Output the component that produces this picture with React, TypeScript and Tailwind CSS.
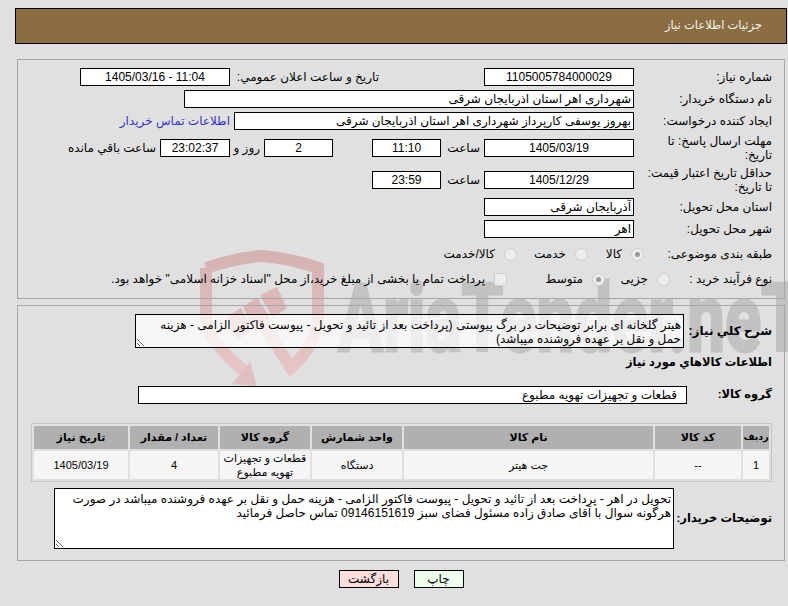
const Box = ({
  children,
  className = "",
}: {
  children?: React.ReactNode;
  className?: string;
}) => (
  <div
    className={`h-[18px] shrink-0 border border-black bg-white px-[2px] text-[12px] leading-[16px] whitespace-nowrap overflow-hidden ${className}`}
  >
    {children}
  </div>
);

const Label = ({ children }: { children: React.ReactNode }) => (
  <div className="w-[138px] shrink-0 pl-[12px] leading-[14px]">{children}</div>
);

const Radio = ({ checked = false }: { checked?: boolean }) => (
  <span className="flex h-[13px] w-[13px] shrink-0 items-center justify-center rounded-full border border-[#cfcfcf] bg-[#ececec]">
    {checked && <span className="h-[5px] w-[5px] rounded-full bg-[#9a9a9a]" />}
  </span>
);

const Watermark = () => (
  <svg className="absolute top-0 left-0 h-[606px] w-[788px]" viewBox="0 0 788 606">
    <defs>
      <linearGradient id="shield" x1="0" y1="0" x2="0" y2="1">
        <stop offset="0" stopColor="#d6b3b3" />
        <stop offset="1" stopColor="#e6c6c6" />
      </linearGradient>
    </defs>
    <text
      x="338"
      y="351"
      direction="ltr"
      fontFamily="Roboto, sans-serif"
      fontWeight="700"
      fontSize="94"
      fill="#c2c2c2"
      stroke="#c2c2c2"
      strokeWidth="3"
      textLength="465"
      lengthAdjust="spacingAndGlyphs"
    >
      AriaTender.neT
    </text>
    <path
      d="M206 268 Q236 258 262 256 Q290 258 318 268 L318 318 Q316 345 291 368 L262 322 M206 268 L206 320 Q206 340 250 376"
      fill="none"
      stroke="url(#shield)"
      strokeWidth="12"
    />
    <path d="M232 384 L250 362 L257 386 Z" fill="#e0c0c0" />
    <path d="M226 317 L241 308 L252 331 L237 340 Z" fill="#dcb8b8" />
    <path d="M243 307 L257 297 L270 318 L254 331 Z" fill="#dcb8b8" />
    <path d="M260 295 L277 287 L287 308 L273 318 Z" fill="#dcb8b8" />
  </svg>
);

const App = () => {
  return (
    <div
      dir="rtl"
      className="relative min-h-[606px] w-[788px] overflow-hidden bg-[#e0e0e0] font-['Liberation_Sans','DejaVu_Sans',sans-serif] text-[12px] text-black"
    >
      <Watermark />
      <div className="relative flex flex-col pt-2 pr-px pl-[15px]">
        <div className="flex h-9 items-center border border-black bg-[#8b6d42] pr-6 text-[11.5px] text-[#f4f4f4]">
          جزئیات اطلاعات نیاز
        </div>

        <div className="mt-[15px] mr-[2px] ml-[2px] h-[240px] border border-[#a6a6a6] pt-[6px] pr-[12px]">
          <div className="flex h-[22px] items-center">
            <Label>شماره نیاز:</Label>
            <Box className="w-[150px] text-center">1105005784000029</Box>
            <div className="w-[254px] shrink-0 pr-[105px]">تاريخ و ساعت اعلان عمومي:</div>
            <Box className="w-[150px] text-center">
              <span dir="ltr">1405/03/16 - 11:04</span>
            </Box>
          </div>
          <div className="flex h-[22px] items-center">
            <Label>نام دستگاه خریدار:</Label>
            <Box className="w-[450px]">شهرداری اهر استان اذربایجان شرقی</Box>
          </div>
          <div className="flex h-[22px] items-center">
            <Label>ایجاد کننده درخواست:</Label>
            <Box className="w-[400px]">بهروز یوسفی کارپرداز شهرداری اهر استان اذربایجان شرقی</Box>
            <a className="mr-[4px] whitespace-nowrap text-[#3333cc]">اطلاعات تماس خریدار</a>
          </div>
          <div className="flex h-[32px] items-center">
            <Label>مهلت ارسال پاسخ: تا تاریخ:</Label>
            <Box className="w-[150px] text-center">1405/03/19</Box>
            <div className="w-[43px] shrink-0 pr-[4px]">ساعت</div>
            <Box className="w-[69px] text-center">11:10</Box>
            <div className="w-[39px] shrink-0" />
            <Box className="w-[69px] text-center">2</Box>
            <div className="w-[34px] shrink-0 pr-[4px]">روز و</div>
            <Box className="w-[70px] bg-[#ffffee] text-center">23:02:37</Box>
            <div className="mr-[4px] whitespace-nowrap">ساعت باقي مانده</div>
          </div>
          <div className="flex h-[32px] items-center">
            <Label>حداقل تاریخ اعتبار قیمت: تا تاریخ:</Label>
            <Box className="w-[150px] text-center">1405/12/29</Box>
            <div className="w-[43px] shrink-0 pr-[4px]">ساعت</div>
            <Box className="w-[69px] text-center">23:59</Box>
          </div>
          <div className="flex h-[22px] items-center">
            <Label>استان محل تحویل:</Label>
            <Box className="w-[150px]">آذربایجان شرقی</Box>
          </div>
          <div className="flex h-[22px] items-center">
            <Label>شهر محل تحویل:</Label>
            <Box className="w-[150px]">اهر</Box>
          </div>
          <div className="flex h-[28px] items-center">
            <div className="w-[128px] shrink-0">طبقه بندی موضوعی:</div>
            <div className="flex w-[56px] shrink-0 items-center gap-[9px]">
              <Radio checked />
              <span>کالا</span>
            </div>
            <div className="flex w-[71px] shrink-0 items-center gap-[9px]">
              <Radio />
              <span>خدمت</span>
            </div>
            <div className="flex items-center gap-[9px]">
              <Radio />
              <span>کالا/خدمت</span>
            </div>
          </div>
          <div className="flex h-[22px] items-center">
            <div className="w-[102px] shrink-0">نوع فرآیند خرید :</div>
            <div className="flex w-[65px] shrink-0 items-center gap-[9px]">
              <Radio />
              <span>جزیی</span>
            </div>
            <div className="flex w-[98px] shrink-0 items-center gap-[9px]">
              <Radio checked />
              <span>متوسط</span>
            </div>
            <div className="flex items-center gap-[9px] whitespace-nowrap">
              <span className="h-[13px] w-[13px] shrink-0 rounded-[2px] border border-[#cfcfcf] bg-[#ececec]" />
              <span>پرداخت تمام یا بخشی از مبلغ خرید،از محل "اسناد خزانه اسلامی" خواهد بود.</span>
            </div>
          </div>
        </div>

        <div className="mt-[6px] mr-[2px] ml-[2px] h-[256px] border border-[#a6a6a6] pt-[8px] pr-[12px]">
          <div className="flex items-center">
            <div className="w-[88px] shrink-0 text-[12px] font-bold whitespace-nowrap">شرح كلي نياز:</div>
            <textarea
              readOnly
              dir="rtl"
              className="h-[34px] w-[549px] border border-black bg-white/70 px-[2px] py-[3px] text-[12px] leading-[14px]"
              defaultValue="هیتر گلخانه ای برابر توضیحات در برگ پیوستی (پرداخت بعد از تائید و تحویل - پیوست فاکتور الزامی - هزینه حمل و نقل بر عهده فروشنده میباشد)"
            />
          </div>
          <div className="mt-[6px] h-[16px] text-[11.5px] leading-[16px] font-bold">
            اطلاعات كالاهاي مورد نياز
          </div>
          <div className="mt-[16px] flex items-center">
            <div className="w-[85px] shrink-0 text-[11.5px] font-bold whitespace-nowrap">گروه کالا:</div>
            <Box className="w-[549px] pr-[9px]">قطعات و تجهیزات تهویه مطبوع</Box>
          </div>
          <table className="mt-[19px] ml-0 h-[58px] w-[741px] table-fixed border-separate border-spacing-[2px] border border-[#c4c4c4] text-center">
            <colgroup>
              <col className="w-[26px]" />
              <col className="w-[86px]" />
              <col className="w-[249px]" />
              <col className="w-[90px]" />
              <col className="w-[90px]" />
              <col className="w-[88px]" />
              <col className="w-[94px]" />
            </colgroup>
            <thead>
              <tr className="h-[23px] bg-[#b0b0b0] text-[11px] font-bold">
                <th className="p-0 text-[9.5px] whitespace-nowrap">ردیف</th>
                <th className="p-0">کد کالا</th>
                <th className="p-0">نام کالا</th>
                <th className="p-0">واحد شمارش</th>
                <th className="p-0">گروه کالا</th>
                <th className="p-0">تعداد / مقدار</th>
                <th className="p-0">تاریخ نیاز</th>
              </tr>
            </thead>
            <tbody>
              <tr className="h-[28px] bg-[#f5f5f5] text-[11px] leading-[14px]">
                <td className="p-0">1</td>
                <td className="p-0">--</td>
                <td className="p-0">جت هیتر</td>
                <td className="p-0">دستگاه</td>
                <td className="p-0 whitespace-nowrap">
                  قطعات و تجهیزات
                  <br />
                  تهویه مطبوع
                </td>
                <td className="p-0">4</td>
                <td className="p-0">1405/03/19</td>
              </tr>
            </tbody>
          </table>
          <div className="mt-[6px] flex items-center">
            <div className="w-[98px] shrink-0 text-[11.5px] font-bold whitespace-nowrap">توضیحات خریدار:</div>
            <textarea
              readOnly
              dir="rtl"
              className="h-[61px] w-[620px] border border-black bg-white px-[2px] py-[3px] text-[12px] leading-[14px]"
              defaultValue="تحویل در اهر - پرداخت بعد از تائید و تحویل - پیوست فاکتور الزامی - هزینه حمل و نقل بر عهده فروشنده میباشد در صورت هرگونه سوال با آقای صادق زاده مسئول فضای سبز 09146151619 تماس حاصل فرمائید"
            />
          </div>
        </div>

        <div className="mt-[9px] flex justify-center gap-[15px]">
          <button className="h-[18px] w-[50px] border border-black bg-[#eeffee] text-[12px] leading-[16px]">چاپ</button>
          <button className="h-[18px] w-[60px] border border-black bg-[#ffdddd] text-[12px] leading-[16px]">بازگشت</button>
        </div>
      </div>
    </div>
  );
};

export default App;
